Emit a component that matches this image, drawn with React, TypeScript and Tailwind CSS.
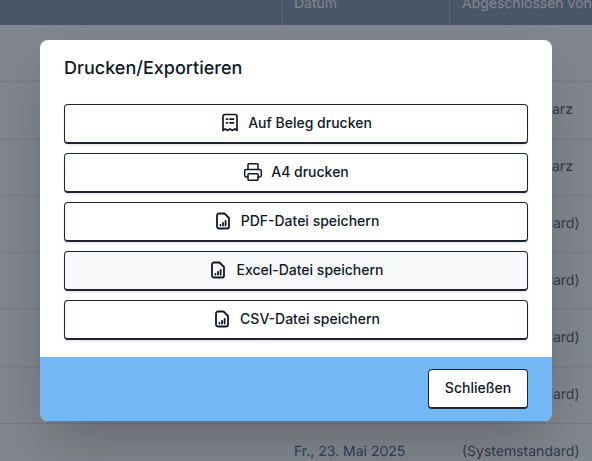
import { Printer } from "lucide-react"

const rows = [
  { date: "", by: "Markus Schwarz" },
  { date: "", by: "Markus Schwarz" },
  { date: "", by: "(Systemstandard)" },
  { date: "", by: "(Systemstandard)" },
  { date: "", by: "(Systemstandard)" },
  { date: "", by: "(Systemstandard)" },
  { date: "Fr., 23. Mai 2025", by: "(Systemstandard)" },
]

function ReceiptIcon() {
  return (
    <svg width="20" height="20" viewBox="0 0 20 20" fill="none" stroke="currentColor" strokeWidth="1.7" strokeLinejoin="round" strokeLinecap="round">
      <path d="M3 3.5a2 2 0 0 1 2-2h10a2 2 0 0 1 2 2v14l-2.3-1.6-2.2 1.6-2.5-1.6-2.5 1.6-2.2-1.6L3 17.5z" />
      <path d="M6.5 6.2h1M6.5 9.8h1M10 6.2h3.5M10 9.8h3.5" />
    </svg>
  )
}

function FileChartIcon() {
  return (
    <svg width="20" height="20" viewBox="0 0 20 20" fill="none" stroke="currentColor" strokeWidth="1.8" strokeLinejoin="round" strokeLinecap="round">
      <path d="M4 4.5a2 2 0 0 1 2-2h5.5L16 7v8.5a2 2 0 0 1-2 2H6a2 2 0 0 1-2-2z" />
      <path d="M7.4 14.6v-.8M10 14.6v-2.8M12.6 14.6v-4.6" />
    </svg>
  )
}

function ExportButton({ label, icon, active }: { label: string; icon: React.ReactNode; active?: boolean }) {
  return (
    <button
      className={`flex h-10 w-full items-center justify-center gap-2 rounded border border-b-2 border-[#1e2433] pb-px text-sm font-medium text-[#111827] shadow-sm ${active ? "bg-[#f7f8fa]" : "bg-white"}`}
    >
      {icon}
      {label}
    </button>
  )
}

export default function App() {
  return (
    <div className="relative h-[461px] w-[592px] overflow-hidden bg-white font-['Inter',sans-serif] [text-rendering:geometricPrecision]">
      <div className="flex h-[25px] items-end overflow-hidden bg-[#8a99b1] text-sm text-white">
        <div className="w-[282px] shrink-0" />
        <div className="h-[25px] w-[167px] shrink-0 whitespace-nowrap border-l border-[#b4bdcb] pl-[11px] leading-[7px]">Datum</div>
        <div className="h-[25px] flex-1 whitespace-nowrap border-l border-[#b4bdcb] pl-[12px] leading-[7px]">Abgeschlossen von</div>
      </div>
      <div className="h-[57px] border-b border-gray-200" />
      {rows.map((row, i) => (
        <div key={i} className="flex h-[57px] items-center border-b border-gray-200 text-sm">
          <div className="w-[294px] shrink-0" />
          <div className="w-[168px] shrink-0 whitespace-nowrap text-[#4f6a94]">{row.date}</div>
          <div className="whitespace-nowrap text-[#5b6270]">{row.by}</div>
        </div>
      ))}

      <div className="absolute inset-0 bg-[#111827]/[.53]">
        <div className="mx-auto mt-10 flex h-[381px] w-[512px] flex-col overflow-hidden rounded-lg bg-white shadow-2xl">
          <div className="flex-1 px-6">
            <h2 className="mt-[17px] text-lg font-medium leading-6 text-[#111827]">Drucken/Exportieren</h2>
            <div className="mt-[23px] flex flex-col gap-[9px]">
              <ExportButton label="Auf Beleg drucken" icon={<ReceiptIcon />} />
              <ExportButton label="A4 drucken" icon={<Printer size={20} strokeWidth={1.8} />} />
              <ExportButton label="PDF-Datei speichern" icon={<FileChartIcon />} />
              <ExportButton label="Excel-Datei speichern" icon={<FileChartIcon />} active />
              <ExportButton label="CSV-Datei speichern" icon={<FileChartIcon />} />
            </div>
          </div>
          <div className="flex h-16 items-center justify-end bg-[#73b7f5] px-6">
            <button className="h-10 w-[100px] rounded border border-b-2 border-[#1e2433] bg-white pb-px text-sm font-medium text-[#111827]">
              Schließen
            </button>
          </div>
        </div>
      </div>
    </div>
  )
}
